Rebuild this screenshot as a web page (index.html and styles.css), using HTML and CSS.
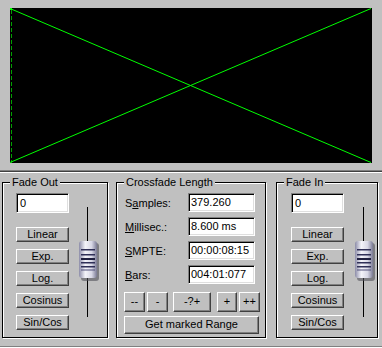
FILE: index.html
```html
<!DOCTYPE html>
<html>
<head>
<meta charset="utf-8">
<link rel="stylesheet" href="styles.css">
</head>
<body>
<div class="window">
  <div class="display">
    <svg class="screen" width="362" height="155" viewBox="0 0 362 155">
      <rect x="0" y="0" width="362" height="155" fill="#000"/>
      <line x1="1.5" y1="2" x2="1.5" y2="155" stroke="#00a000" stroke-width="1" stroke-dasharray="4 2"/>
      <line x1="0" y1="0.5" x2="361" y2="154.5" stroke="#00ff00" stroke-width="1"/>
      <line x1="0" y1="154.5" x2="361" y2="0.5" stroke="#00ff00" stroke-width="1"/>
      <rect x="0" y="0" width="2" height="2" fill="#00ff00"/>
    </svg>
  </div>
  <div class="groups">
    <div class="group fade-out">
      <span class="group-title">Fade Out</span>
      <div class="col">
        <div class="field">0</div>
        <div class="btn-stack">
          <div class="btn">Linear</div>
          <div class="btn">Exp.</div>
          <div class="btn">Log.</div>
          <div class="btn">Cosinus</div>
          <div class="btn">Sin/Cos</div>
        </div>
      </div>
      <div class="slider">
        <div class="track"></div>
        <svg class="thumb" width="21" height="41" viewBox="0 0 21 41">
          <defs>
            <linearGradient id="tg1" x1="0" y1="0" x2="1" y2="0">
              <stop offset="0" stop-color="#8c8ca8"/>
              <stop offset="0.35" stop-color="#f4f4fa"/>
              <stop offset="0.7" stop-color="#d8d8e6"/>
              <stop offset="1" stop-color="#7a7a94"/>
            </linearGradient>
          </defs>
          <rect x="2" y="2" width="18" height="38" rx="3" fill="#505058" opacity="0.6"/>
          <rect x="0" y="0" width="18" height="37" rx="3" fill="url(#tg1)"/>
          <rect x="2" y="8" width="14" height="1.5" fill="#303058"/>
          <rect x="2" y="13" width="14" height="1.5" fill="#303058"/>
          <rect x="2" y="17" width="14" height="2" fill="#202040"/>
          <rect x="2" y="21" width="14" height="1.5" fill="#303058"/>
          <rect x="2" y="25" width="14" height="1.5" fill="#303058"/>
          <rect x="2" y="28.5" width="14" height="1" fill="#50507a"/>
        </svg>
      </div>
    </div>

    <div class="group crossfade">
      <span class="group-title">Crossfade Length</span>
      <div class="rows">
        <div class="row"><span class="label">S<u>a</u>mples:</span><div class="field wide">379.260</div></div>
        <div class="row"><span class="label"><u>M</u>illisec.:</span><div class="field wide">8.600 ms</div></div>
        <div class="row"><span class="label"><u>S</u>MPTE:</span><div class="field wide">00:00:08:15</div></div>
        <div class="row"><span class="label"><u>B</u>ars:</span><div class="field wide">004:01:077</div></div>
      </div>
      <div class="step-row">
        <div class="btn step">--</div>
        <div class="btn step">-</div>
        <div class="btn step mid">-?+</div>
        <div class="btn step plus">+</div>
        <div class="btn step">++</div>
      </div>
      <div class="btn range">Get marked Range</div>
    </div>

    <div class="group fade-in">
      <span class="group-title">Fade In</span>
      <div class="col">
        <div class="field">0</div>
        <div class="btn-stack">
          <div class="btn">Linear</div>
          <div class="btn">Exp.</div>
          <div class="btn">Log.</div>
          <div class="btn">Cosinus</div>
          <div class="btn">Sin/Cos</div>
        </div>
      </div>
      <div class="slider">
        <div class="track"></div>
        <svg class="thumb" width="21" height="41" viewBox="0 0 21 41">
          <defs>
            <linearGradient id="tg2" x1="0" y1="0" x2="1" y2="0">
              <stop offset="0" stop-color="#8c8ca8"/>
              <stop offset="0.35" stop-color="#f4f4fa"/>
              <stop offset="0.7" stop-color="#d8d8e6"/>
              <stop offset="1" stop-color="#7a7a94"/>
            </linearGradient>
          </defs>
          <rect x="2" y="2" width="18" height="38" rx="3" fill="#505058" opacity="0.6"/>
          <rect x="0" y="0" width="18" height="37" rx="3" fill="url(#tg2)"/>
          <rect x="2" y="8" width="14" height="1.5" fill="#303058"/>
          <rect x="2" y="13" width="14" height="1.5" fill="#303058"/>
          <rect x="2" y="17" width="14" height="2" fill="#202040"/>
          <rect x="2" y="21" width="14" height="1.5" fill="#303058"/>
          <rect x="2" y="25" width="14" height="1.5" fill="#303058"/>
          <rect x="2" y="28.5" width="14" height="1" fill="#50507a"/>
        </svg>
      </div>
    </div>
  </div>
  <div class="bottom-edge"></div>
</div>
</body>
</html>
```

FILE: styles.css
```css
* { box-sizing: border-box; }

html, body {
  margin: 0;
  padding: 0;
}

body {
  background: #c0c0c0;
  font-family: "Liberation Sans", Arial, sans-serif;
  font-size: 11px;
  color: #000;
  width: 382px;
  height: 348px;
  overflow: hidden;
}

.window {
  width: 382px;
  height: 348px;
  display: flex;
  flex-direction: column;
}

.display {
  height: 171px;
  padding: 8px 10px 0 10px;
  border-bottom: 1px solid #808080;
  box-shadow: 0 1px 0 #404040, 0 2px 0 #ffffff;
}

.screen {
  display: block;
}

.groups {
  display: flex;
  padding-left: 2px;
  margin-top: 11px;
}

.group {
  position: relative;
  height: 156px;
  border: 1px solid #000;
  box-shadow: inset 1px 1px 0 #fff, 1px 1px 0 #fff;
}

.group-title {
  position: absolute;
  top: -7px;
  left: 7px;
  padding: 0 2px;
  background: #c0c0c0;
  line-height: 13px;
  white-space: nowrap;
}

.fade-out {
  width: 106px;
  display: flex;
  padding: 10px 0 0 13px;
}

.crossfade {
  width: 150px;
  margin-left: 8px;
  padding: 10px 0 0 7px;
}

.fade-in {
  width: 102px;
  margin-left: 10px;
  display: flex;
  padding: 10px 0 0 14px;
}

.col {
  width: 53px;
  display: flex;
  flex-direction: column;
}

.field {
  height: 20px;
  background: #fff;
  border-top: 1px solid #808080;
  border-left: 1px solid #808080;
  border-bottom: 1px solid #fff;
  border-right: 1px solid #fff;
  box-shadow: inset 1px 1px 0 #000, inset -1px -1px 0 #dfdfdf;
  padding: 0 0 0 3px;
  line-height: 18px;
  white-space: nowrap;
}

.btn-stack {
  display: flex;
  flex-direction: column;
  gap: 7px;
  margin-top: 14px;
}

.btn {
  height: 15px;
  border-top: 1px solid #fff;
  border-left: 1px solid #fff;
  border-bottom: 1px solid #404040;
  border-right: 1px solid #404040;
  box-shadow: inset -1px -1px 0 #808080;
  text-align: center;
  line-height: 12px;
  white-space: nowrap;
}

.slider {
  position: relative;
  width: 21px;
  height: 110px;
  margin-top: 14px;
}

.fade-out .slider { margin-left: 10px; }
.fade-in .slider { margin-left: 11px; }

.track {
  width: 1px;
  height: 110px;
  margin-left: 8px;
  background: #000;
}

.thumb {
  position: absolute;
  left: 0;
  top: 34px;
}

.rows {
  display: flex;
  flex-direction: column;
  gap: 5px;
}

.row {
  display: flex;
  align-items: center;
  padding-left: 1px;
}

.label {
  width: 63px;
}

.field.wide {
  width: 67px;
  height: 19px;
  line-height: 17px;
  padding-left: 2px;
}

.step-row {
  display: flex;
  margin-top: 8px;
}

.btn.step {
  width: 21px;
  height: 20px;
  line-height: 17px;
  margin-right: 2px;
}

.btn.step.mid {
  width: 38px;
  margin-left: 3px;
  margin-right: 5px;
}

.btn.step.plus {
  width: 20px;
  margin-left: 1px;
}

.btn.range {
  width: 135px;
  height: 18px;
  line-height: 15px;
  margin-top: 4px;
}

.bottom-edge {
  margin-top: auto;
  height: 2px;
  border-top: 1px solid #808080;
  border-bottom: 1px solid #fff;
}
```
